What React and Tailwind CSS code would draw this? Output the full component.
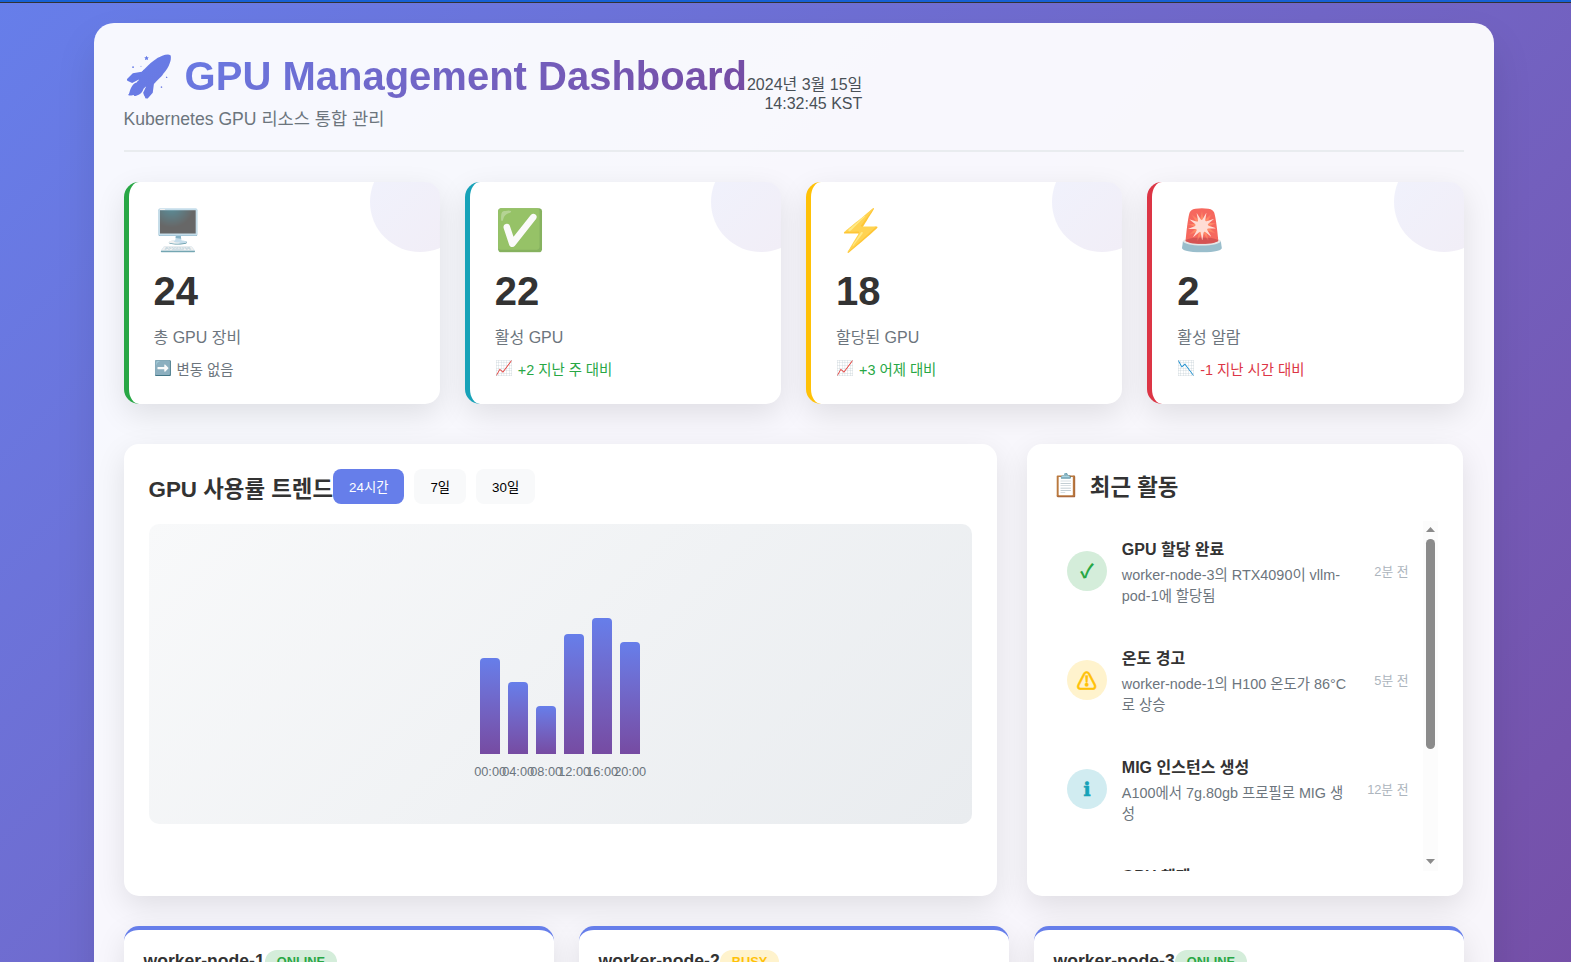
const stats = [
  { icon: '🖥️', nudge: '-ml-[0.5px]', value: '24', label: '총 GPU 장비', trendIcon: '➡️', trend: '변동 없음', border: 'border-[#28a745]', color: 'text-[#6c757d]' },
  { icon: '✅', nudge: '', value: '22', label: '활성 GPU', trendIcon: '📈', trend: '+2 지난 주 대비', border: 'border-[#17a2b8]', color: 'text-[#28a745]' },
  { icon: '⚡', nudge: '', value: '18', label: '할당된 GPU', trendIcon: '📈', trend: '+3 어제 대비', border: 'border-[#ffc107]', color: 'text-[#28a745]' },
  { icon: '🚨', nudge: '', value: '2', label: '활성 알람', trendIcon: '📉', trend: '-1 지난 시간 대비', border: 'border-[#dc3545]', color: 'text-[#dc3545]' },
];

const bars = [
  { time: '00:00', value: 60 },
  { time: '04:00', value: 45 },
  { time: '08:00', value: 30 },
  { time: '12:00', value: 75 },
  { time: '16:00', value: 85 },
  { time: '20:00', value: 70 },
];

const activities = [
  { icon: '✓', tone: 'bg-[#d4edda] text-[#28a745] text-[19.2px]', title: 'GPU 할당 완료', desc: 'worker-node-3의 RTX4090이 vllm-pod-1에 할당됨', time: '2분 전' },
  { icon: '⚠', tone: 'bg-[#fff3cd] text-[#ffc107] text-[20px] [-webkit-text-stroke:0.4px]', title: '온도 경고', desc: 'worker-node-1의 H100 온도가 86°C로 상승', time: '5분 전' },
  { icon: 'ℹ', tone: "bg-[#d1ecf1] text-[#17a2b8] text-[19.2px] font-['DejaVu_Sans',sans-serif] [-webkit-text-stroke:0.5px]", title: 'MIG 인스턴스 생성', desc: 'A100에서 7g.80gb 프로필로 MIG 생성', time: '12분 전' },
  { icon: '', tone: 'bg-[#d4edda] text-[#28a745] text-[19.2px]', title: 'GPU 해제', desc: '', time: '' },
];

const nodes = [
  { name: 'worker-node-1', status: 'ONLINE', tone: 'bg-[#d4edda] text-[#28a745]' },
  { name: 'worker-node-2', status: 'BUSY', tone: 'bg-[#fff3cd] text-[#ffc107]' },
  { name: 'worker-node-3', status: 'ONLINE', tone: 'bg-[#d4edda] text-[#28a745]' },
];

function StatCard({ stat }) {
  return (
    <div className={`relative h-[222px] overflow-hidden rounded-[15px] border-l-[5px] bg-white p-[25px] shadow-[0_10px_30px_rgba(0,0,0,0.1)] ${stat.border}`}>
      <div className="absolute -top-[30px] -right-[30px] size-[100px] rounded-full bg-linear-135 from-[#667eea] to-[#764ba2] opacity-10" />
      <div className={`h-[47px] text-[40px] leading-[47px] opacity-80 ${stat.nudge}`}>{stat.icon}</div>
      <div className="mt-[14px] h-[46px] text-[40px] leading-[46px] font-bold text-[#333]">{stat.value}</div>
      <div className="mt-3 h-6 text-base leading-6 text-[#6c757d]">{stat.label}</div>
      <div className={`mt-[10px] flex gap-[5px] text-[14.4px] leading-[21px] ${stat.color}`}>
        <span className="-mt-[2px]">{stat.trendIcon}</span>
        <span>{stat.trend}</span>
      </div>
    </div>
  );
}

function UsageChart() {
  return (
    <section className="rounded-[15px] bg-white p-[25px] shadow-[0_10px_30px_rgba(0,0,0,0.1)]">
      <div className="mb-5 flex h-[35px] items-center">
        <h2 className="pt-[5px] text-[22.4px] leading-[33px] font-bold text-[#333]">GPU 사용률 트렌드</h2>
        <div className="flex gap-[10px] text-[13.33px] text-black">
          <button className="h-[35px] rounded-lg bg-[#667eea] px-4 pt-[2px] text-white">24시간</button>
          <button className="h-[35px] rounded-lg bg-[#f8f9fa] px-4 pt-[2px]">7일</button>
          <button className="h-[35px] rounded-lg bg-[#f8f9fa] px-4 pt-[2px]">30일</button>
        </div>
      </div>
      <div className="flex h-[300px] items-center justify-center rounded-[10px] bg-linear-135 from-[#f8f9fa] to-[#e9ecef]">
        <div className="flex h-40 items-end gap-2">
          {bars.map((b) => (
            <div
              key={b.time}
              className="relative w-5 rounded-t bg-linear-to-b from-[#667eea] to-[#764ba2]"
              style={{ height: `${b.value}%` }}
            >
              <span className="absolute -bottom-[25px] left-1/2 -translate-x-1/2 text-[12.8px] leading-[15px] text-[#6c757d]">{b.time}</span>
            </div>
          ))}
        </div>
      </div>
    </section>
  );
}

function ActivityFeed() {
  return (
    <section className="rounded-[15px] bg-white p-[25px] shadow-[0_10px_30px_rgba(0,0,0,0.1)]">
      <h2 className="mb-5 flex h-8 gap-[10px] text-[22.4px] leading-[37px] font-bold text-[#333]">
        <span className="-mt-[2px]">📋</span>
        <span>최근 활동</span>
      </h2>
      <div className="flex h-[350px] overflow-hidden">
        <div className="min-w-0 flex-1">
          {activities.map((a) => (
            <div key={a.title} className="mb-[10px] flex h-[99px] items-center p-[15px]">
              <div className={`mr-[15px] flex size-10 shrink-0 items-center justify-center rounded-full pt-1 font-bold ${a.tone}`}>{a.icon}</div>
              <div className="min-w-0 flex-1 pt-1">
                <div className="mb-[3px] text-base leading-6 font-bold text-[#333]">{a.title}</div>
                <div className="h-[42px] text-[14.4px] leading-[21px] text-[#6c757d]">{a.desc}</div>
              </div>
              <div className="ml-5 shrink-0 pt-[2px] text-[12.8px] text-[#adb5bd]">{a.time}</div>
            </div>
          ))}
        </div>
        <div className="flex w-[15px] shrink-0 flex-col items-center justify-between bg-[#fcfcfc] pt-[6px] pb-[7px]">
          <div className="flex flex-col items-center gap-[7px]">
            <svg className="h-[5px] w-[9px]" viewBox="0 0 9 5"><path d="M0 5 4.5 0 9 5z" fill="#8b8b8b" /></svg>
            <div className="h-[210px] w-[9px] rounded-full bg-[#8b8b8b]" />
          </div>
          <svg className="h-[5px] w-[9px]" viewBox="0 0 9 5"><path d="M0 0 4.5 5 9 0z" fill="#8b8b8b" /></svg>
        </div>
      </div>
    </section>
  );
}

export default function App() {
  return (
    <div className="h-[962px] overflow-hidden font-['Liberation_Sans','Noto_Sans_CJK_KR',sans-serif]">
      <div className="h-[1215px] bg-linear-135 from-[#667eea] to-[#764ba2]">
        <div className="h-[3px] border-b border-[#333] bg-[#1560d4]" />
        <main className="mt-5 ml-[93.5px] h-[1172px] w-[1400px] rounded-[20px] bg-white/95 p-[30px] shadow-[0_20px_40px_rgba(0,0,0,0.1)]">
          <header className="mb-[30px] flex h-[99px] items-center border-b-2 border-[#e9ecef] pb-5">
            <div>
              <h1 className="h-[46px] bg-linear-135 from-[#667eea] to-[#764ba2] bg-clip-text text-[40px] leading-[46px] font-bold whitespace-nowrap text-transparent">🚀 GPU Management Dashboard</h1>
              <p className="mt-[5px] h-[26px] text-[17.6px] leading-[30px] text-[#6c757d]">Kubernetes GPU 리소스 통합 관리</p>
            </div>
            <div className="pt-[3px] text-right text-base text-[#495057]">
              <div className="h-[22px] leading-[22px]">2024년 3월 15일</div>
              <div className="h-[17px] leading-[15px]">14:32:45 KST</div>
            </div>
          </header>
          <div className="mb-10 grid grid-cols-4 gap-[25px]">
            {stats.map((s) => (
              <StatCard key={s.label} stat={s} />
            ))}
          </div>
          <div className="mb-[30px] grid h-[452px] grid-cols-[2fr_1fr] gap-[30px]">
            <UsageChart />
            <ActivityFeed />
          </div>
          <div className="grid grid-cols-3 gap-[25px]">
            {nodes.map((n) => (
              <article key={n.name} className="h-[220px] rounded-[15px] border-t-4 border-[#667eea] bg-white p-5 shadow-[0_10px_30px_rgba(0,0,0,0.1)]">
                <div className="flex items-center">
                  <h3 className="pb-[2px] text-[17.6px] leading-5 font-bold text-[#333]">{n.name}</h3>
                  <span className={`h-[24px] rounded-full px-3 text-[12.8px] leading-[24px] font-bold ${n.tone}`}>{n.status}</span>
                </div>
              </article>
            ))}
          </div>
        </main>
      </div>
    </div>
  );
}
